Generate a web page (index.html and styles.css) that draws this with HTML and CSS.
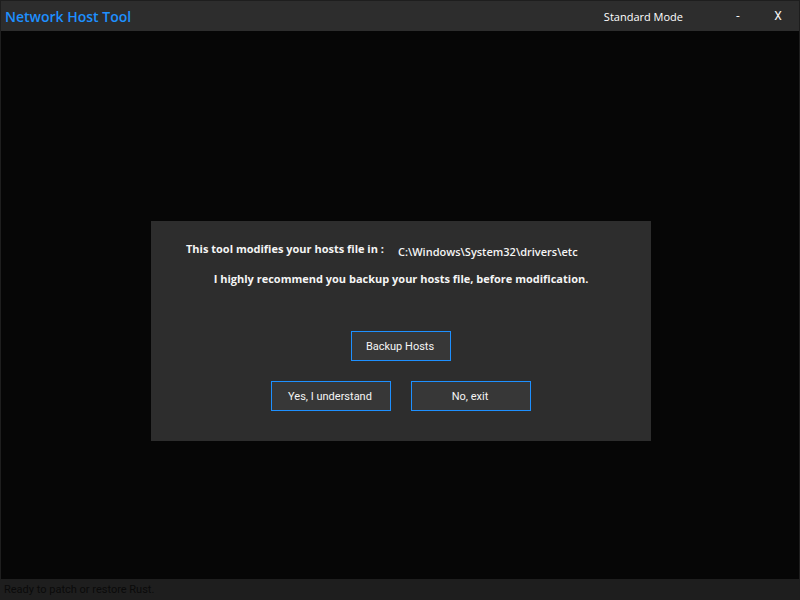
FILE: index.html
```html
<!DOCTYPE html>
<html lang="en">
<head>
    <meta charset="UTF-8">
    <meta name="viewport" content="width=device-width, initial-scale=1.0">
    <title>Network Host Tool</title>
    <link rel="stylesheet" href="styles.css">
</head>
<body>
    <header class="titlebar">
        <h1>Network Host Tool</h1>
        <span class="mode">Standard Mode</span>
        <div class="window-buttons">
            <button type="button" aria-label="Minimize">-</button>
            <button type="button" aria-label="Close">X</button>
        </div>
    </header>

    <main>
        <section class="dialog">
            <div class="hosts-path">
                <span class="notice">This tool modifies your hosts file in :</span>
                <span class="path">C:\Windows\System32\drivers\etc</span>
            </div>
            <p class="notice">I highly recommend you backup your hosts file, before modification.</p>
            <div class="actions">
                <button type="button" class="btn btn-backup">Backup Hosts</button>
            </div>
            <div class="actions">
                <button type="button" class="btn">Yes, I understand</button>
                <button type="button" class="btn">No, exit</button>
            </div>
        </section>
    </main>

    <footer class="statusbar">Ready to patch or restore Rust.</footer>
</body>
</html>
```

FILE: styles.css
```css
:root {
    --accent: #1e90ff;
    --panel: #2d2d2d;
    --edge: #1e1e1e;
    --text: #f5f5f5;
}

* {
    box-sizing: border-box;
}

body {
    margin: 0;
    min-height: 100vh;
    display: flex;
    flex-direction: column;
    border: 1px solid var(--edge);
    background: #060606;
    color: var(--text);
    font-family: "Open Sans", "Noto Sans", sans-serif;
    font-size: 11px;
}

button {
    font-family: Roboto, "Liberation Sans", sans-serif;
    font-size: 11px;
    color: inherit;
    cursor: pointer;
}

/* Title bar */
.titlebar {
    display: flex;
    align-items: flex-start;
    height: 30px;
    padding-left: 4px;
    background: var(--panel);
}

h1 {
    margin: 0;
    color: var(--accent);
    font-size: 14px;
    font-weight: 600;
    line-height: 32px;
}

.mode {
    margin-left: auto;
    padding-right: 36px;
    line-height: 32px;
    color: #fff;
}

.window-buttons {
    display: flex;
}

.window-buttons button {
    width: 40px;
    height: 30px;
    padding: 0 2px 0 0;
    border: none;
    background: transparent;
    font-size: 12px;
}

/* Dialog */
main {
    flex: 1;
    display: flex;
    align-items: center;
    justify-content: center;
    padding: 52px 0 0 2px;
}

.dialog {
    width: 500px;
    padding: 20px 0 30px;
    background: var(--panel);
}

.hosts-path {
    display: flex;
    align-items: flex-end;
    gap: 14px;
    height: 20px;
    margin-left: 35px;
}

.notice {
    margin: 0;
    font-weight: 700;
    line-height: 20px;
    white-space: nowrap;
}

.hosts-path .notice {
    align-self: flex-start;
    line-height: 16px;
}

.path {
    font-weight: 600;
    line-height: 18px;
}

p.notice {
    margin: 8px 0 42px;
    text-align: center;
}

.actions {
    display: flex;
    justify-content: center;
    gap: 20px;
}

.actions + .actions {
    margin-top: 20px;
}

.btn {
    width: 120px;
    height: 30px;
    padding: 0 2px 0 0;
    border: 1px solid var(--accent);
    background: #373737;
}

.btn-backup {
    width: 100px;
}

/* Status bar */
.statusbar {
    height: 20px;
    padding: 0 3px;
    background: var(--edge);
    color: #0a0a0a;
    font-family: Roboto, "Liberation Sans", sans-serif;
    line-height: 22px;
}
```
